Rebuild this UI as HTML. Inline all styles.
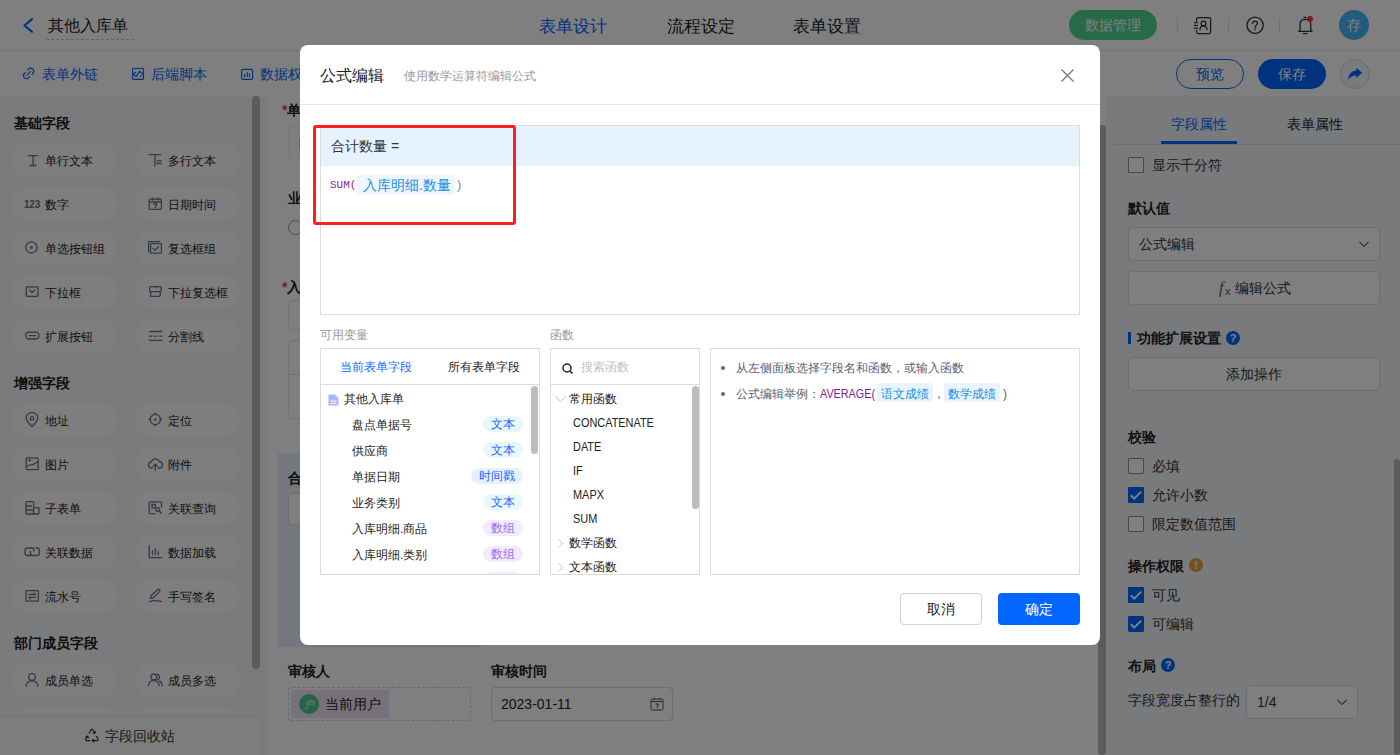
<!DOCTYPE html><html><head><meta charset="utf-8"><style>
*{box-sizing:border-box;margin:0;padding:0}
html,body{width:1400px;height:755px;overflow:hidden;background:#fff}
body{position:relative;font-family:"Liberation Sans",sans-serif;color:#333;font-size:14px}
.a{position:absolute;white-space:nowrap}
svg{display:block;position:absolute}
.t14{font-size:14px;line-height:20px}
.t13{font-size:13px;line-height:18px}
.t12{font-size:12px;line-height:16px}
.chip{position:absolute;width:105px;height:34px;border-radius:17px;background:#fdfdfe}
.chip span{position:absolute;left:33px;top:10px;font-size:12px;line-height:16px;color:#222}

.sec{position:absolute;left:14px;font-size:14px;line-height:20px;font-weight:bold;color:#1a1a1a}
.cb{position:absolute;width:16px;height:16px;border:1px solid #8f8f8f;border-radius:1px;background:#fff}
.cb.on{background:#0066ff;border-color:#0066ff}
.rlab{position:absolute;font-size:14px;line-height:20px;color:#333}
.rb{position:absolute;font-size:14px;line-height:20px;font-weight:bold;color:#222}
</style></head><body>
<div class="a" style="left:0;top:0;width:1400px;height:51px;background:#fff;border-bottom:1px solid #ebebeb"></div>
<svg style="left:22px;top:16px" width="14" height="18" viewBox="0 0 14 18"><path d="M10 3.1 L2.4 9.5 L10 15.8" fill="none" stroke="#0066ff" stroke-width="2.1" stroke-linecap="round" stroke-linejoin="round"/></svg>
<div class="a" style="left:48px;top:14px;font-size:16px;line-height:24px;color:#222">其他入库单</div>
<div class="a" style="left:46px;top:39px;width:88px;height:0;border-top:1px dashed #c8c8c8"></div>
<div class="a" style="left:539px;top:14px;font-size:17px;line-height:26px;color:#0066ff">表单设计</div>
<div class="a" style="left:667px;top:14px;font-size:17px;line-height:26px;color:#222">流程设定</div>
<div class="a" style="left:793px;top:14px;font-size:17px;line-height:26px;color:#222">表单设置</div>
<div class="a" style="left:1069px;top:10px;width:88px;height:30px;border-radius:15px;background:#4cd491;color:#fff;font-size:14px;line-height:30px;text-align:center">数据管理</div>
<div class="a" style="left:1177px;top:18px;width:1px;height:14px;background:#ddd"></div>
<div class="a" style="left:1228px;top:18px;width:1px;height:14px;background:#ddd"></div>
<div class="a" style="left:1279px;top:18px;width:1px;height:14px;background:#ddd"></div>
<svg style="left:1188px;top:12px" width="30" height="26" viewBox="0 0 30 26"><g fill="none" stroke="#333" stroke-width="1.25" stroke-linecap="round"><path d="M8.6 9 V7.1 Q8.6 5.6 10.1 5.6 H21.1 Q22.6 5.6 22.6 7.1 V20.1 Q22.6 21.6 21.1 21.6 H10.1 Q8.6 21.6 8.6 20.1 V18.3"/><path d="M6.4 10.5 H9.4 M6.4 13.4 H9.4 M6.4 16.2 H9.4"/><circle cx="15.5" cy="11.4" r="2.4"/><path d="M11.9 17.6 C12.1 15 13.8 13.8 15.5 13.8 C17.2 13.8 18.9 15 19.1 17.6"/></g></svg>
<svg style="left:1240px;top:10px" width="30" height="30" viewBox="0 0 30 30"><circle cx="15.1" cy="15.3" r="8.1" fill="none" stroke="#333" stroke-width="1.3"/><path d="M12.7 13.3 C12.7 11.9 13.7 11.1 15 11.1 C16.4 11.1 17.4 12 17.4 13.2 C17.4 14.8 15.2 15 15.2 17.3" fill="none" stroke="#333" stroke-width="1.3" stroke-linecap="round"/><circle cx="15.2" cy="19.3" r="0.85" fill="#333"/></svg>
<svg style="left:1290px;top:10px" width="30" height="30" viewBox="0 0 30 30"><g fill="none" stroke="#333" stroke-width="1.3" stroke-linecap="round" stroke-linejoin="round"><path d="M13.9 7.3 H15.9"/><path d="M8.8 21.3 L10.1 19.8 V13.8 C10.1 11.1 12 9.3 15.4 9.3 C18.8 9.3 20.7 11.1 20.7 13.8 V19.8 L22 21.3 Z"/><path d="M13.4 23.6 H16.8"/></g><circle cx="20" cy="8.9" r="3" fill="#f03c3c"/></svg>
<div class="a" style="left:1339px;top:10px;width:30px;height:30px;border-radius:50%;background:#4ab4ff;color:#fff;font-size:14px;line-height:30px;text-align:center">存</div>

<div class="a" style="left:0;top:51px;width:1400px;height:45px;background:#fff"></div>
<svg style="left:18px;top:62px" width="22" height="22" viewBox="0 0 22 22"><g fill="none" stroke="#0066ff" stroke-width="1.15" stroke-linecap="round"><path d="M9.6 8.1 L10.5 7.2 A3 3 0 0 1 14.8 11.5 L14.1 12.3"/><path d="M7.3 10.6 L6.4 11.5 A3 3 0 0 0 10.7 15.8 L11.5 15"/><path d="M8.8 13.3 L12.4 9.7"/></g></svg>
<div class="a t14" style="left:42px;top:64px;color:#0066ff">表单外链</div>
<svg style="left:128px;top:62px" width="22" height="22" viewBox="0 0 22 22"><g fill="none" stroke="#0066ff" stroke-width="1.15" stroke-linejoin="round" stroke-linecap="round"><rect x="4.6" y="6.5" width="10.9" height="10.9" rx="0.8"/><path d="M7.5 10.3 L5.2 12.3 L8.4 14.5 L11.4 9.3 L15.2 12.3 M13.2 13.4 L12.3 14.4"/></g></svg>
<div class="a t14" style="left:151px;top:64px;color:#0066ff">后端脚本</div>
<svg style="left:237px;top:62px" width="22" height="22" viewBox="0 0 22 22"><g fill="none" stroke="#0066ff" stroke-width="1.15" stroke-linecap="round"><rect x="4.6" y="7.3" width="11" height="10" rx="1.6"/><path d="M7.5 12.5 V14.6 M10.2 10.6 V14.6 M12.5 11.8 V14.6"/></g></svg>
<div class="a t14" style="left:260px;top:64px;color:#0066ff">数据权限</div>
<div class="a" style="left:1176px;top:59px;width:68px;height:30px;border-radius:15px;border:1px solid #0066ff;color:#0066ff;font-size:14px;line-height:28px;text-align:center">预览</div>
<div class="a" style="left:1258px;top:59px;width:68px;height:30px;border-radius:15px;background:#0066ff;color:#fff;font-size:14px;line-height:30px;text-align:center">保存</div>
<div class="a" style="left:1340px;top:59px;width:30px;height:30px;border-radius:50%;border:1px solid #d3ddf0;background:#f3f6fc"></div>
<svg style="left:1336px;top:56px" width="38" height="36" viewBox="0 0 38 36"><path d="M26.2 16.8 L20.3 11.7 V14.5 C15.5 14.8 12.4 18.2 12.2 24 C14 20.9 16.6 19.4 20.3 19.4 V22 Z" fill="#0066ff"/></svg>

<div class="a" style="left:0;top:96px;width:268px;height:659px;background:#f4f6f9"></div>
<div class="a" style="left:252px;top:96px;width:8px;height:573px;border-radius:4px;background:#b9b9b9"></div>
<div class="sec" style="top:113px">基础字段</div>
<div class="chip" style="left:12px;top:143px"><svg style="left:12px;top:8px" width="18" height="18" viewBox="0 0 18 18"><g fill="none" stroke="#66738a" stroke-width="1.3" stroke-linecap="round" stroke-linejoin="round"><path d="M4.1 4.6H13.9M9.1 4.6V14.5M5.9 14.5H11.9"/></g></svg><span>单行文本</span></div>
<div class="chip" style="left:135px;top:143px"><svg style="left:12px;top:8px" width="18" height="18" viewBox="0 0 18 18"><g fill="none" stroke="#66738a" stroke-width="1.3" stroke-linecap="round" stroke-linejoin="round"><path d="M2.2 3.6H13.6M7.9 3.6V15.2M9.9 9.9H14.4M9.9 12.5H14.4"/></g></svg><span>多行文本</span></div>
<div class="chip" style="left:12px;top:187px"><div style="position:absolute;left:12px;top:12px;font-size:10px;line-height:11px;font-weight:700;letter-spacing:-0.2px;color:#66738a">123</div><span>数字</span></div>
<div class="chip" style="left:135px;top:187px"><svg style="left:12px;top:8px" width="18" height="18" viewBox="0 0 18 18"><g fill="none" stroke="#66738a" stroke-width="1.3" stroke-linecap="round" stroke-linejoin="round"><rect x="2.2" y="4.2" width="12.2" height="10.2" rx="1"/><path d="M2.2 7H14.4M5.5 2.8V5M11.1 2.8V5M6.8 9H10L8.2 12.6"/></g></svg><span>日期时间</span></div>
<div class="chip" style="left:12px;top:231px"><svg style="left:12px;top:8px" width="18" height="18" viewBox="0 0 18 18"><g fill="none" stroke="#66738a" stroke-width="1.3" stroke-linecap="round" stroke-linejoin="round"><circle cx="7.4" cy="8.4" r="5.6"/><circle cx="7.4" cy="8.4" r="1.4" fill="#66738a" stroke="none"/></g></svg><span>单选按钮组</span></div>
<div class="chip" style="left:135px;top:231px"><svg style="left:12px;top:8px" width="18" height="18" viewBox="0 0 18 18"><g fill="none" stroke="#66738a" stroke-width="1.3" stroke-linecap="round" stroke-linejoin="round"><path d="M1.6 13V2.6H12.4"/><rect x="3.6" y="4.6" width="10.8" height="9.6" rx="0.8"/><path d="M6 9.4L8 11.3L11.8 7.4"/></g></svg><span>复选框组</span></div>
<div class="chip" style="left:12px;top:275px"><svg style="left:12px;top:8px" width="18" height="18" viewBox="0 0 18 18"><g fill="none" stroke="#66738a" stroke-width="1.3" stroke-linecap="round" stroke-linejoin="round"><rect x="2.2" y="3.8" width="11.8" height="9.5" rx="0.8"/><path d="M5.5 7.1L8.1 9.4L10.7 7.1"/></g></svg><span>下拉框</span></div>
<div class="chip" style="left:135px;top:275px"><svg style="left:12px;top:8px" width="18" height="18" viewBox="0 0 18 18"><g fill="none" stroke="#66738a" stroke-width="1.3" stroke-linecap="round" stroke-linejoin="round"><rect x="2.6" y="3.6" width="11.6" height="5" rx="1"/><path d="M3.6 8.6V12.4A1 1 0 0 0 4.6 13.4H12.2A1 1 0 0 0 13.2 12.4V8.6"/><path d="M7.1 3.8H9.7L8.4 5.6Z" fill="#66738a" stroke="none"/></g></svg><span>下拉复选框</span></div>
<div class="chip" style="left:12px;top:319px"><svg style="left:12px;top:8px" width="18" height="18" viewBox="0 0 18 18"><g fill="none" stroke="#66738a" stroke-width="1.3" stroke-linecap="round" stroke-linejoin="round"><rect x="1.6" y="5.2" width="13.4" height="6.8" rx="3.4"/><path d="M5 8.6H11.6"/></g></svg><span>扩展按钮</span></div>
<div class="chip" style="left:135px;top:319px"><svg style="left:12px;top:8px" width="18" height="18" viewBox="0 0 18 18"><g fill="none" stroke="#66738a" stroke-width="1.3" stroke-linecap="round" stroke-linejoin="round"><path d="M2.4 4.5H14.8M2.4 13.4H14.8M2.4 9.1H5M7.3 9.1H9.8M12.1 9.1H14.8"/></g></svg><span>分割线</span></div>
<div class="sec" style="top:373px">增强字段</div>
<div class="chip" style="left:12px;top:403px"><svg style="left:12px;top:8px" width="18" height="18" viewBox="0 0 18 18"><g fill="none" stroke="#66738a" stroke-width="1.3" stroke-linecap="round" stroke-linejoin="round"><path d="M8 15.6C4.5 11.8 2.2 9.5 2.2 7.2A5.8 5.8 0 0 1 13.8 7.2C13.8 9.5 11.5 11.8 8 15.6Z"/><circle cx="8" cy="7.4" r="1.8"/></g></svg><span>地址</span></div>
<div class="chip" style="left:135px;top:403px"><svg style="left:12px;top:8px" width="18" height="18" viewBox="0 0 18 18"><g fill="none" stroke="#66738a" stroke-width="1.3" stroke-linecap="round" stroke-linejoin="round"><circle cx="8.3" cy="8.5" r="5.1"/><circle cx="8.3" cy="8.5" r="1.2" fill="#66738a" stroke="none"/><path d="M8.3 2.1V3.6M8.3 13.4V14.9M1.9 8.5H3.4M13.2 8.5H14.7"/></g></svg><span>定位</span></div>
<div class="chip" style="left:12px;top:447px"><svg style="left:12px;top:8px" width="18" height="18" viewBox="0 0 18 18"><g fill="none" stroke="#66738a" stroke-width="1.3" stroke-linecap="round" stroke-linejoin="round"><rect x="2.2" y="2.8" width="12" height="11.9" rx="1"/><path d="M2.6 12C5 8.6 7.5 11 10 9 C11.5 7.8 12.5 7.2 14 6.9M4.8 5.2H6.4M5.6 4.4V6"/></g></svg><span>图片</span></div>
<div class="chip" style="left:135px;top:447px"><svg style="left:12px;top:8px" width="18" height="18" viewBox="0 0 18 18"><g fill="none" stroke="#66738a" stroke-width="1.3" stroke-linecap="round" stroke-linejoin="round"><path d="M5.5 13H4.6A3 3 0 0 1 4.3 7 A4.1 4.1 0 0 1 12.2 6.6 A3.2 3.2 0 0 1 12.3 13H11.2M8.3 15.2V9.4M6.3 11.3L8.3 9.3L10.3 11.3"/></g></svg><span>附件</span></div>
<div class="chip" style="left:12px;top:491px"><svg style="left:12px;top:8px" width="18" height="18" viewBox="0 0 18 18"><g fill="none" stroke="#66738a" stroke-width="1.3" stroke-linecap="round" stroke-linejoin="round"><path d="M9.6 8V3.6A1 1 0 0 0 8.6 2.6H3A1 1 0 0 0 2 3.6V14A1 1 0 0 0 3 15H9.6M2 7H7.5M2 11H9.6"/><rect x="9.6" y="8.6" width="5.4" height="6.4" rx="0.8"/></g></svg><span>子表单</span></div>
<div class="chip" style="left:135px;top:491px"><svg style="left:12px;top:8px" width="18" height="18" viewBox="0 0 18 18"><g fill="none" stroke="#66738a" stroke-width="1.3" stroke-linecap="round" stroke-linejoin="round"><path d="M14.5 8V3.8A1 1 0 0 0 13.5 2.8H3.2A1 1 0 0 0 2.2 3.8V13.7A1 1 0 0 0 3.2 14.7H8"/><rect x="5" y="5.5" width="3.4" height="3.4"/><circle cx="10.8" cy="10.6" r="1.9"/><path d="M12.2 12L14.4 14.2"/></g></svg><span>关联查询</span></div>
<div class="chip" style="left:12px;top:535px"><svg style="left:12px;top:8px" width="18" height="18" viewBox="0 0 18 18"><g fill="none" stroke="#66738a" stroke-width="1.3" stroke-linecap="round" stroke-linejoin="round"><path d="M7 12.5H3A2 2 0 0 1 1 10.5V7A2 2 0 0 1 3 5H8A2 2 0 0 1 10 7V8"/><path d="M6.5 8.5V10.5A2 2 0 0 0 8.5 12.5H13.3A2 2 0 0 0 15.3 10.5V7A2 2 0 0 0 13.3 5H12"/></g></svg><span>关联数据</span></div>
<div class="chip" style="left:135px;top:535px"><svg style="left:12px;top:8px" width="18" height="18" viewBox="0 0 18 18"><g fill="none" stroke="#66738a" stroke-width="1.3" stroke-linecap="round" stroke-linejoin="round"><path d="M2.2 2.6V14.6H15M5.5 7.5V11.8M8.4 5.6V11.8M11.3 8.5V11.8"/></g></svg><span>数据加载</span></div>
<div class="chip" style="left:12px;top:579px"><svg style="left:12px;top:8px" width="18" height="18" viewBox="0 0 18 18"><g fill="none" stroke="#66738a" stroke-width="1.3" stroke-linecap="round" stroke-linejoin="round"><rect x="2" y="3.6" width="12.4" height="10.6" rx="0.8"/><path d="M4.8 7.5H11.6L10.2 6.2M11.6 10.4H4.8L6.2 11.7"/></g></svg><span>流水号</span></div>
<div class="chip" style="left:135px;top:579px"><svg style="left:12px;top:8px" width="18" height="18" viewBox="0 0 18 18"><g fill="none" stroke="#66738a" stroke-width="1.3" stroke-linecap="round" stroke-linejoin="round"><path d="M3.4 11.4L4 8.8L10.6 2.8A1.3 1.3 0 0 1 12.6 4.6L6.2 10.8Z"/><path d="M2.6 14.6C5 13.4 8 13.2 14.4 14.4"/></g></svg><span>手写签名</span></div>
<div class="sec" style="top:633px">部门成员字段</div>
<div class="chip" style="left:12px;top:663px"><svg style="left:12px;top:8px" width="18" height="18" viewBox="0 0 18 18"><g fill="none" stroke="#66738a" stroke-width="1.3" stroke-linecap="round" stroke-linejoin="round"><circle cx="8" cy="6" r="3.3"/><path d="M2 15.3C2.3 11.5 4.8 9.8 8 9.8C11.2 9.8 13.7 11.5 14 15.3"/></g></svg><span>成员单选</span></div>
<div class="chip" style="left:135px;top:663px"><svg style="left:12px;top:8px" width="18" height="18" viewBox="0 0 18 18"><g fill="none" stroke="#66738a" stroke-width="1.3" stroke-linecap="round" stroke-linejoin="round"><circle cx="6.8" cy="6" r="3"/><path d="M1.4 14.6C1.7 11.2 3.9 9.6 6.8 9.6C9.7 9.6 11.9 11.2 12.2 14.6M10.5 3.2A3 3 0 0 1 10.6 8.8M12.4 9.9C14 10.6 15 12.3 15.2 14.6"/></g></svg><span>成员多选</span></div>
<div class="chip" style="left:12px;top:707px"><span></span></div>
<div class="chip" style="left:135px;top:707px"><span></span></div>
<div class="a" style="left:0;top:716px;width:260px;height:39px;background:#fbfbfc;border-top:1px solid #e6e8eb"></div>
<svg style="left:80px;top:722px" width="24" height="26" viewBox="0 0 24 26"><g fill="none" stroke="#333" stroke-width="1.2" stroke-linecap="round" stroke-linejoin="round"><path d="M9.2 11 L11 7.8 Q11.9 6.6 12.8 7.8 L14.8 11.2 M13.2 10.9 L14.9 11.3 L15.3 9.6"/><path d="M16.5 14.3 L18 17 Q18.6 18.6 17 18.6 L12.3 18.6 M13.6 17.3 L12.2 18.6 L13.6 19.9"/><path d="M9.8 18.6 L6.8 18.6 Q5.2 18.6 5.9 17 L7.4 14.3 M6.1 15 L7.5 14.1 L8.4 15.6"/></g></svg>
<div class="a t14" style="left:105px;top:726px;color:#333">字段回收站</div>
<div class="a" style="left:268px;top:96px;width:832px;height:659px;background:#fff"></div>
<div class="a" style="left:1098px;top:125px;width:8px;height:630px;border-radius:4px;background:#b9b9b9"></div>
<div class="a t14" style="left:282px;top:100px;font-weight:bold;color:#222"><span style="color:#f03c3c">*</span>单据编号</div>
<div class="a" style="left:288px;top:126px;width:400px;height:34px;border:1px solid #f0f0f0;border-radius:2px;background:#fcfcfc"></div>
<div class="a" style="left:299px;top:138px;width:1px;height:11px;background:#e0b890"></div>
<div class="a t14" style="left:288px;top:188px;font-weight:bold;color:#222">业务类别</div>
<div class="a" style="left:288px;top:220px;width:15px;height:15px;border:1px solid #999;border-radius:50%"></div>
<div class="a t14" style="left:282px;top:277px;font-weight:bold;color:#222"><span style="color:#f03c3c">*</span>入库明细</div>
<div class="a" style="left:288px;top:300px;width:400px;height:30px;border:1px solid #e4e4e4;border-radius:4px"></div>
<div class="a" style="left:288px;top:340px;width:400px;height:79px;border:1px solid #e4e4e4;border-radius:4px"></div>
<div class="a" style="left:288px;top:374px;width:400px;height:1px;background:#e4e4e4"></div>
<div class="a" style="left:278px;top:453px;width:203px;height:194px;background:#e9f1fd"></div>
<div class="a t14" style="left:288px;top:468px;font-weight:bold;color:#222">合计数量</div>
<div class="a" style="left:288px;top:493px;width:183px;height:32px;border:1px solid #dcdcdc;border-radius:4px;background:#fff"></div>
<div class="a t14" style="left:288px;top:661px;font-weight:bold;color:#222">审核人</div>
<div class="a" style="left:288px;top:687px;width:183px;height:34px;border:1px dashed #d0d0d0;border-radius:4px"></div>
<div class="a" style="left:291px;top:690px;width:98px;height:28px;background:#ece3f5;border-radius:2px"></div>
<div class="a" style="left:299px;top:694px;width:20px;height:20px;border-radius:50%;background:#4cc98c;color:#fff3d0;font-size:11px;line-height:20px;text-align:center">户</div>
<div class="a t14" style="left:325px;top:694px;color:#222">当前用户</div>
<div class="a t14" style="left:491px;top:661px;font-weight:bold;color:#222">审核时间</div>
<div class="a" style="left:491px;top:687px;width:182px;height:34px;border:1px solid #dcdcdc;border-radius:4px"></div>
<div class="a t14" style="left:501px;top:694px;color:#222">2023-01-11</div>
<svg style="left:650px;top:697px" width="14" height="14" viewBox="0 0 14 14"><rect x="1" y="2" width="12" height="11" rx="1.5" fill="none" stroke="#555" stroke-width="1"/><path d="M1 4.5h12M4 1v2M10 1v2M5.5 7h3l-1.5 4" fill="none" stroke="#555" stroke-width="1"/></svg>
<div class="a" style="left:1106px;top:96px;width:294px;height:659px;background:#f2f4f9"></div>
<div class="a" style="left:1394px;top:459px;width:6px;height:296px;border-radius:3px;background:#b9b9b9"></div>
<div class="a t14" style="left:1171px;top:114px;color:#0066ff">字段属性</div>
<div class="a t14" style="left:1287px;top:114px;color:#222">表单属性</div>
<div class="a" style="left:1114px;top:144px;width:286px;height:1px;background:#dcdfe6"></div>
<div class="a" style="left:1161px;top:141px;width:76px;height:3px;background:#0066ff"></div>
<div class="cb" style="left:1128px;top:157px"></div>
<div class="rlab" style="left:1152px;top:155px">显示千分符</div>
<div class="rb" style="left:1128px;top:198px">默认值</div>
<div class="a" style="left:1128px;top:227px;width:252px;height:34px;border:1px solid #dcdfe6;border-radius:4px;background:#fff"></div>
<div class="rlab" style="left:1139px;top:234px">公式编辑</div>
<svg style="left:1358px;top:239px" width="12" height="10" viewBox="0 0 12 10"><path d="M1.5 3 L6 7.5 L10.5 3" fill="none" stroke="#666" stroke-width="1.1"/></svg>
<div class="a" style="left:1128px;top:271px;width:252px;height:34px;border:1px solid #dcdfe6;border-radius:4px;background:#fff"></div>
<div class="a" style="left:1219px;top:278px;font-size:16px;line-height:20px;font-style:italic;color:#555;font-family:'Liberation Serif',serif">f</div><div class="a" style="left:1225px;top:285px;font-size:11px;line-height:12px;color:#555">x</div>
<div class="rlab" style="left:1235px;top:278px">编辑公式</div>
<div class="a" style="left:1128px;top:332px;width:3px;height:12px;background:#0066ff"></div>
<div class="rb" style="left:1137px;top:328px">功能扩展设置</div>
<div class="a" style="left:1226px;top:331px;width:14px;height:14px;border-radius:50%;background:#0066ff;color:#fff;font-size:11px;line-height:14px;text-align:center;font-weight:bold">?</div>
<div class="a" style="left:1128px;top:357px;width:252px;height:34px;border:1px solid #dcdfe6;border-radius:4px;background:#fff"></div>
<div class="rlab" style="left:1226px;top:364px">添加操作</div>
<div class="rb" style="left:1128px;top:427px">校验</div>
<div class="cb" style="left:1128px;top:458px"></div>
<div class="rlab" style="left:1152px;top:456px">必填</div>
<div class="cb on" style="left:1128px;top:487px"><svg style="left:0px;top:0px" width="14" height="14" viewBox="0 0 14 14"><path d="M1.8 7.3 L5.2 10.6 L12.2 3.6" fill="none" stroke="#fff" stroke-width="2"/></svg></div>
<div class="rlab" style="left:1152px;top:485px">允许小数</div>
<div class="cb" style="left:1128px;top:516px"></div>
<div class="rlab" style="left:1152px;top:514px">限定数值范围</div>
<div class="rb" style="left:1128px;top:556px">操作权限</div>
<div class="a" style="left:1189px;top:558px;width:14px;height:14px;border-radius:50%;background:#e8a04a;color:#fff;font-size:11px;line-height:14px;text-align:center;font-weight:bold">!</div>
<div class="cb on" style="left:1128px;top:587px"><svg style="left:0px;top:0px" width="14" height="14" viewBox="0 0 14 14"><path d="M1.8 7.3 L5.2 10.6 L12.2 3.6" fill="none" stroke="#fff" stroke-width="2"/></svg></div>
<div class="rlab" style="left:1152px;top:585px">可见</div>
<div class="cb on" style="left:1128px;top:616px"><svg style="left:0px;top:0px" width="14" height="14" viewBox="0 0 14 14"><path d="M1.8 7.3 L5.2 10.6 L12.2 3.6" fill="none" stroke="#fff" stroke-width="2"/></svg></div>
<div class="rlab" style="left:1152px;top:614px">可编辑</div>
<div class="rb" style="left:1128px;top:656px">布局</div>
<div class="a" style="left:1161px;top:658px;width:14px;height:14px;border-radius:50%;background:#0066ff;color:#fff;font-size:11px;line-height:14px;text-align:center;font-weight:bold">?</div>
<div class="rlab" style="left:1128px;top:690px">字段宽度占整行的</div>
<div class="a" style="left:1246px;top:685px;width:112px;height:34px;border:1px solid #dcdfe6;border-radius:4px;background:#fff"></div>
<div class="rlab" style="left:1257px;top:692px">1/4</div>
<svg style="left:1336px;top:697px" width="12" height="10" viewBox="0 0 12 10"><path d="M1.5 3 L6 7.5 L10.5 3" fill="none" stroke="#666" stroke-width="1.1"/></svg>
<div class="a" style="left:0;top:0;width:1400px;height:755px;background:rgba(0,0,0,.5)"></div>
<div class="a" style="left:300px;top:45px;width:800px;height:600px;background:#fff;border-radius:8px"></div>
<div class="a" style="left:320px;top:64px;font-size:16px;line-height:24px;color:#222">公式编辑</div>
<div class="a" style="left:404px;top:68px;font-size:12px;line-height:17px;color:#999">使用数学运算符编辑公式</div>
<svg style="left:1060px;top:68px" width="15" height="15" viewBox="0 0 15 15"><path d="M1.5 1.5 L13.5 13.5 M13.5 1.5 L1.5 13.5" stroke="#777" stroke-width="1.3"/></svg>
<div class="a" style="left:300px;top:104px;width:800px;height:1px;background:#e8e8e8"></div>
<div class="a" style="left:320px;top:125px;width:760px;height:190px;border:1px solid #dcdcdc"></div>
<div class="a" style="left:321px;top:126px;width:758px;height:40px;background:#e6f3fe"></div>
<div class="a t14" style="left:331px;top:136px;color:#333">合计数量 =</div>
<div class="a" style="left:330px;top:178px;font-family:'Liberation Mono',monospace;font-size:11px;line-height:14px;color:#8a1f99">SUM(</div>
<div class="a" style="left:357px;top:175px;width:98px;height:20px;background:#eef6ff;border-radius:3px"></div>
<div class="a t14" style="left:363px;top:175px;color:#1b8fdc">入库明细.数量</div>
<div class="a" style="left:457px;top:177px;font-size:13px;line-height:16px;color:#888">)</div>
<div class="a" style="left:313px;top:125px;width:203px;height:100px;border:3px solid #ff1f1f;border-radius:3px"></div>
<div class="a t12" style="left:320px;top:327px;color:#999">可用变量</div>
<div class="a t12" style="left:550px;top:327px;color:#999">函数</div>
<div class="a" style="left:320px;top:348px;width:220px;height:227px;border:1px solid #dcdcdc;overflow:hidden"><div class="a" style="left:0;top:35px;width:220px;height:1px;background:#dcdcdc"></div><div class="a t12" style="left:19px;top:10px;color:#1a66ff">当前表单字段</div><div class="a t12" style="left:127px;top:10px;color:#222">所有表单字段</div><svg style="left:7px;top:45px" width="11" height="12" viewBox="0 0 11 12"><path d="M0.5 0.5H7L10.5 4V11.5H0.5Z" fill="#a9b6fb"/><path d="M2.5 7H8.5M2.5 9.3H8.5" stroke="#fff" stroke-width="1"/></svg><div class="a t12" style="left:23px;top:42px;color:#222">其他入库单</div><div class="a" style="left:210px;top:37px;width:7px;height:68px;border-radius:3.5px;background:#bdbdbd"></div><div class="a t12" style="left:31px;top:68px;color:#222">盘点单据号</div><div class="a" style="left:162px;top:67px;width:40px;height:16px;border-radius:8px;background:#e7f8f8;color:#1a66ff;font-size:12px;line-height:16px;text-align:center">文本</div><div class="a t12" style="left:31px;top:94px;color:#222">供应商</div><div class="a" style="left:162px;top:93px;width:40px;height:16px;border-radius:8px;background:#e7f8f8;color:#1a66ff;font-size:12px;line-height:16px;text-align:center">文本</div><div class="a t12" style="left:31px;top:120px;color:#222">单据日期</div><div class="a" style="left:150px;top:119px;width:52px;height:16px;border-radius:8px;background:#e6f1ff;color:#1a66ff;font-size:12px;line-height:16px;text-align:center">时间戳</div><div class="a t12" style="left:31px;top:146px;color:#222">业务类别</div><div class="a" style="left:162px;top:145px;width:40px;height:16px;border-radius:8px;background:#e7f8f8;color:#1a66ff;font-size:12px;line-height:16px;text-align:center">文本</div><div class="a t12" style="left:31px;top:172px;color:#222">入库明细.商品</div><div class="a" style="left:162px;top:171px;width:40px;height:16px;border-radius:8px;background:#f1ebff;color:#9b6cf2;font-size:12px;line-height:16px;text-align:center">数组</div><div class="a t12" style="left:31px;top:198px;color:#222">入库明细.类别</div><div class="a" style="left:162px;top:197px;width:40px;height:16px;border-radius:8px;background:#f1ebff;color:#9b6cf2;font-size:12px;line-height:16px;text-align:center">数组</div><div class="a t12" style="left:31px;top:224px;color:#222"></div><div class="a" style="left:162px;top:223px;width:40px;height:16px;border-radius:8px;background:#f1ebff;color:#9b6cf2;font-size:12px;line-height:16px;text-align:center"></div></div>
<div class="a" style="left:550px;top:348px;width:150px;height:227px;border:1px solid #dcdcdc;overflow:hidden"><div class="a" style="left:0;top:35px;width:150px;height:1px;background:#dcdcdc"></div><svg style="left:11px;top:14px" width="12" height="12" viewBox="0 0 12 12"><circle cx="5" cy="5" r="4" fill="none" stroke="#222" stroke-width="1.5"/><path d="M8 8L10.5 10.5" stroke="#222" stroke-width="1.6"/></svg><div class="a t12" style="left:30px;top:10px;color:#c0c4cc">搜索函数</div><svg style="left:4px;top:47px" width="11" height="7" viewBox="0 0 11 7"><path d="M0.5 0.5L5.5 5.5L10.5 0.5" fill="none" stroke="#c4c7cc" stroke-width="1"/></svg><div class="a t12" style="left:18px;top:42px;color:#222">常用函数</div><div class="a t12" style="left:22px;top:66px;color:#222;transform:scaleX(.91);transform-origin:0 0">CONCATENATE</div><div class="a t12" style="left:22px;top:90px;color:#222;transform:scaleX(.91);transform-origin:0 0">DATE</div><div class="a t12" style="left:22px;top:114px;color:#222;transform:scaleX(.91);transform-origin:0 0">IF</div><div class="a t12" style="left:22px;top:138px;color:#222;transform:scaleX(.91);transform-origin:0 0">MAPX</div><div class="a t12" style="left:22px;top:162px;color:#222;transform:scaleX(.91);transform-origin:0 0">SUM</div><svg style="left:7px;top:190px" width="5" height="9" viewBox="0 0 5 9"><path d="M0.5 0.5L4.5 4.5L0.5 8.5" fill="none" stroke="#c4c7cc" stroke-width="1"/></svg><div class="a t12" style="left:18px;top:186px;color:#222">数学函数</div><svg style="left:7px;top:214px" width="5" height="9" viewBox="0 0 5 9"><path d="M0.5 0.5L4.5 4.5L0.5 8.5" fill="none" stroke="#c4c7cc" stroke-width="1"/></svg><div class="a t12" style="left:18px;top:210px;color:#222">文本函数</div><div class="a" style="left:141px;top:37px;width:7px;height:123px;border-radius:3.5px;background:#bdbdbd"></div></div>
<div class="a" style="left:710px;top:348px;width:370px;height:227px;border:1px solid #dcdcdc"></div>
<div class="a" style="left:721px;top:366px;width:4px;height:4px;border-radius:50%;background:#5e6a80"></div>
<div class="a" style="left:721px;top:392px;width:4px;height:4px;border-radius:50%;background:#5e6a80"></div>
<div class="a t12" style="left:736px;top:360px;color:#596274">从左侧面板选择字段名和函数，或输入函数</div>
<div class="a t12" style="left:736px;top:386px;color:#596274">公式编辑举例：</div>
<div class="a t12" style="left:820px;top:386px;color:#7d1f8f;transform:scaleX(.9);transform-origin:0 0">AVERAGE(</div>
<div class="a" style="left:877px;top:383px;width:56px;height:19px;background:#e8f4ff;border-radius:3px"></div>
<div class="a t12" style="left:881px;top:386px;color:#1b8fdc">语文成绩</div>
<div class="a t12" style="left:933px;top:386px;color:#596274">，</div>
<div class="a" style="left:944px;top:383px;width:56px;height:19px;background:#e8f4ff;border-radius:3px"></div>
<div class="a t12" style="left:948px;top:386px;color:#1b8fdc">数学成绩</div>
<div class="a t12" style="left:1003px;top:386px;color:#596274">)</div>
<div class="a" style="left:900px;top:593px;width:82px;height:32px;border:1px solid #d0d0d0;border-radius:4px;background:#fff;color:#222;font-size:14px;line-height:30px;text-align:center">取消</div>
<div class="a" style="left:998px;top:593px;width:82px;height:32px;border-radius:4px;background:#0066ff;color:#fff;font-size:14px;line-height:32px;text-align:center">确定</div>
</body></html>
